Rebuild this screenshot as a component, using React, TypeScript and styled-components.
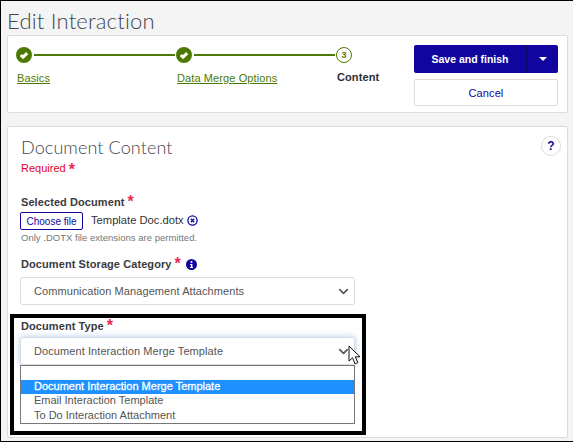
import React from 'react';
import styled, { createGlobalStyle } from 'styled-components';
import { ChevronDown } from 'lucide-react';

const NAVY = '#10069f';
const GREEN = '#4c7a00';
const RED = '#e4002b';

const GlobalStyle = createGlobalStyle`
  html, body {
    margin: 0;
    padding: 0;
    height: 100%;
  }
  body {
    font-family: "Liberation Sans", Arial, sans-serif;
    background: #f4f4f4;
  }
`;

const Page = styled.div`
  position: relative;
  box-sizing: border-box;
  width: 573px;
  height: 442px;
  overflow: hidden;
  background: #f4f4f4;
  border: solid #000;
  border-width: 1px 0 1px 1px;
  padding: 0 5px 0 6px;
`;

const Title = styled.h1`
  margin: 0;
  height: 34px;
  font-family: Lato, sans-serif;
  font-weight: 300;
  font-size: 22px;
  line-height: 40px;
  letter-spacing: 0.2px;
  color: #41464d;
`;

const Card = styled.section`
  box-sizing: border-box;
  background: #fff;
  border: 1px solid #dcdcdc;
  border-radius: 2px;
`;

const HeaderCard = styled(Card)`
  height: 78px;
  display: flex;
  justify-content: space-between;
  padding: 9px 9px 0 8px;
  margin-bottom: 13px;
`;

const Stepper = styled.div`
  display: flex;
  width: 380px;
`;

const Step = styled.div<{ $last?: boolean }>`
  display: flex;
  flex-direction: column;
  width: ${(p) => (p.$last ? '60px' : '160px')};
`;

const StepHead = styled.div`
  display: flex;
  align-items: center;
  height: 20px;
`;

const Connector = styled.div`
  width: 141px;
  height: 2px;
  margin-left: 2px;
  background: ${GREEN};
`;

const StepLink = styled.a`
  margin: 7px 0 0 1px;
  font-size: 11px;
  line-height: 13px;
  letter-spacing: 0.1px;
  color: ${GREEN};
  text-decoration: underline;
`;

const StepCurrent = styled.span`
  margin: 6px 0 0 1px;
  font-size: 11px;
  line-height: 13px;
  font-weight: 700;
  letter-spacing: 0.1px;
  color: #2d2d33;
`;

const StepNumber = styled.span`
  box-sizing: border-box;
  display: flex;
  align-items: center;
  justify-content: center;
  width: 16px;
  height: 16px;
  border: 1px solid ${GREEN};
  border-radius: 50%;
  font-size: 9px;
  font-weight: 700;
  color: ${GREEN};
`;

const Actions = styled.div`
  display: flex;
  flex-direction: column;
  gap: 6px;
  width: 144px;
`;

const SplitButton = styled.div`
  display: flex;
  height: 28px;
  border-radius: 2px;
  overflow: hidden;
  background: ${NAVY};
`;

const SaveButton = styled.button`
  flex: 1;
  border: 0;
  border-right: 1px solid #0a0468;
  background: transparent;
  padding: 0;
  font-family: inherit;
  font-size: 10.5px;
  font-weight: 700;
  color: #fff;
`;

const CaretButton = styled.button`
  width: 31px;
  border: 0;
  background: transparent;
  padding: 0;
  display: flex;
  align-items: center;
  justify-content: center;
`;

const Caret = styled.span`
  width: 0;
  height: 0;
  border-left: 4px solid transparent;
  border-right: 4px solid transparent;
  border-top: 4px solid #fff;
`;

const CancelButton = styled.button`
  height: 27px;
  border: 1px solid #dcdcdc;
  border-radius: 2px;
  background: #fff;
  padding: 0;
  font-family: inherit;
  font-size: 11px;
  letter-spacing: 0.1px;
  color: ${NAVY};
`;

const ContentCard = styled(Card)`
  position: relative;
  height: 312px;
  padding: 9px 0 0 13px;
`;

const HeadingRow = styled.div`
  display: flex;
  justify-content: space-between;
  align-items: flex-start;
  padding-right: 8px;
`;

const Heading = styled.h2`
  margin: 0;
  font-family: Lato, sans-serif;
  font-weight: 300;
  font-size: 18px;
  line-height: 22px;
  letter-spacing: 0.1px;
  color: #41464d;
`;

const HelpButton = styled.button`
  box-sizing: border-box;
  width: 20px;
  height: 20px;
  margin-right: -2px;
  padding: 0;
  border: 1px solid #dcdcdc;
  border-radius: 50%;
  background: #fff;
  font-family: inherit;
  font-size: 12px;
  font-weight: 700;
  color: ${NAVY};
`;

const Required = styled.div`
  margin-top: 2px;
  height: 35px;
  font-size: 11px;
  line-height: 16px;
  color: ${RED};
`;

const Star = styled.span`
  color: #e62a55;
  font-size: 16px;
  font-weight: 700;
  line-height: 10px;
  margin-left: 3px;
  vertical-align: -3px;
`;

const FieldLabel = styled.div<{ $top?: number }>`
  display: flex;
  align-items: center;
  height: 14px;
  margin-top: ${(p) => p.$top ?? 0}px;
  font-size: 11px;
  font-weight: 700;
  letter-spacing: 0.08px;
  color: #3a3a40;
`;

const FileRow = styled.div`
  display: flex;
  align-items: center;
  margin: 3px 0 0 -1px;
  height: 18px;
`;

const ChooseButton = styled.button`
  box-sizing: border-box;
  width: 63px;
  height: 18px;
  padding: 0;
  border: 1px solid ${NAVY};
  border-radius: 2px;
  background: #fff;
  font-family: inherit;
  font-size: 10px;
  color: ${NAVY};
`;

const FileName = styled.span`
  margin: -2px 0 0 8px;
  font-size: 11.2px;
  color: #333;
`;

const Hint = styled.div`
  font-size: 9.5px;
  line-height: 13px;
  margin-top: 1px;
  letter-spacing: 0.02px;
  color: #777;
`;

const SelectBox = styled.div<{ $focused?: boolean; $top: number }>`
  box-sizing: border-box;
  display: flex;
  align-items: center;
  justify-content: space-between;
  width: 335px;
  height: 28px;
  margin: ${(p) => p.$top}px 0 0 -1px;
  padding: 0 3px 0 13px;
  background: #fff;
  border: 1px solid #dcdcdc;
  border-radius: 3px;
  font-size: 11px;
  letter-spacing: 0.08px;
  color: #555;
  box-shadow: ${(p) => (p.$focused ? '0 0 6px rgba(120, 170, 230, 0.6)' : 'none')};
`;

const OptionList = styled.ul`
  box-sizing: border-box;
  width: 335px;
  height: 59px;
  margin: 0 0 0 -1px;
  padding: 14px 0 0;
  list-style: none;
  background: #fff;
  border: 1px solid #767676;
`;

const Option = styled.li<{ $selected?: boolean }>`
  height: 14px;
  padding-left: 13px;
  font-size: 11px;
  line-height: 13px;
  background: ${(p) => (p.$selected ? '#1e90ff' : 'transparent')};
  color: ${(p) => (p.$selected ? '#fff' : '#555')};
  -webkit-text-stroke: ${(p) => (p.$selected ? '0.3px #fff' : '0')};
  &:last-child {
    line-height: 15px;
  }
`;

// annotation drawn on top of the screenshot, not part of the form
const Highlight = styled.div`
  position: absolute;
  left: 2px;
  top: 187px;
  width: 356px;
  height: 121px;
  box-sizing: border-box;
  border: 4px solid #000;
  pointer-events: none;
`;

const Pointer = styled.svg`
  position: absolute;
  left: 340px;
  top: 218px;
`;

const SelectChevron = styled(ChevronDown)`
  color: #555;
`;

const InlineIcon = styled.svg<{ $lift?: number; $gap?: number }>`
  margin: ${(p) => -(p.$lift ?? 0)}px 0 0 ${(p) => p.$gap ?? 3}px;
  flex: none;
`;

function CheckCircle() {
  return (
    <svg width="16" height="16" viewBox="0 0 16 16">
      <circle cx="8" cy="8" r="8" fill={GREEN} />
      <path d="M4.8 8 7 10.2 11.2 6.2" fill="none" stroke="#fff" strokeWidth="3" />
    </svg>
  );
}

export default function App() {
  return (
    <Page>
      <GlobalStyle />
      <Title>Edit Interaction</Title>
      <HeaderCard>
        <Stepper>
          <Step>
            <StepHead>
              <CheckCircle />
              <Connector />
            </StepHead>
            <StepLink>Basics</StepLink>
          </Step>
          <Step>
            <StepHead>
              <CheckCircle />
              <Connector />
            </StepHead>
            <StepLink>Data Merge Options</StepLink>
          </Step>
          <Step $last>
            <StepHead>
              <StepNumber>3</StepNumber>
            </StepHead>
            <StepCurrent>Content</StepCurrent>
          </Step>
        </Stepper>
        <Actions>
          <SplitButton>
            <SaveButton>Save and finish</SaveButton>
            <CaretButton>
              <Caret />
            </CaretButton>
          </SplitButton>
          <CancelButton>Cancel</CancelButton>
        </Actions>
      </HeaderCard>
      <ContentCard>
        <HeadingRow>
          <Heading>Document Content</Heading>
          <HelpButton>?</HelpButton>
        </HeadingRow>
        <Required>
          Required<Star>*</Star>
        </Required>
        <FieldLabel>
          Selected Document<Star>*</Star>
        </FieldLabel>
        <FileRow>
          <ChooseButton>Choose file</ChooseButton>
          <FileName>Template Doc.dotx</FileName>
          <InlineIcon $lift={2} width="11" height="11" viewBox="0 0 11 11">
            <circle cx="5.5" cy="5.5" r="4.6" fill="none" stroke={NAVY} strokeWidth="1.3" />
            <path d="M3.8 3.8 7.2 7.2M7.2 3.8 3.8 7.2" stroke={NAVY} strokeWidth="1.3" />
          </InlineIcon>
        </FileRow>
        <Hint>Only .DOTX file extensions are permitted.</Hint>
        <FieldLabel $top={13}>
          Document Storage Category<Star>*</Star>
          <InlineIcon $gap={5} width="11" height="11" viewBox="0 0 11 11">
            <circle cx="5.5" cy="5.5" r="5.5" fill={NAVY} />
            <circle cx="5.5" cy="3" r="1" fill="#fff" />
            <path d="M4.2 5h2.2v3h.6v1H4v-1h.9V6h-.7z" fill="#fff" />
          </InlineIcon>
        </FieldLabel>
        <SelectBox $top={6}>
          Communication Management Attachments
          <SelectChevron size={15} strokeWidth={2.6} />
        </SelectBox>
        <FieldLabel $top={14}>
          Document Type<Star>*</Star>
        </FieldLabel>
        <SelectBox $focused $top={4}>
          Document Interaction Merge Template
          <SelectChevron size={15} strokeWidth={2.6} />
        </SelectBox>
        <OptionList>
          <Option $selected>Document Interaction Merge Template</Option>
          <Option>Email Interaction Template</Option>
          <Option>To Do Interaction Attachment</Option>
        </OptionList>
        <Highlight />
        <Pointer width="14" height="20" viewBox="0 0 14 20">
          <path
            d="M1 1v15l3.6-3.2 2.4 6 2.8-1.2-2.5-5.8H12z"
            fill="#fff"
            stroke="#111"
            strokeWidth="1"
            strokeLinejoin="round"
          />
        </Pointer>
      </ContentCard>
    </Page>
  );
}
